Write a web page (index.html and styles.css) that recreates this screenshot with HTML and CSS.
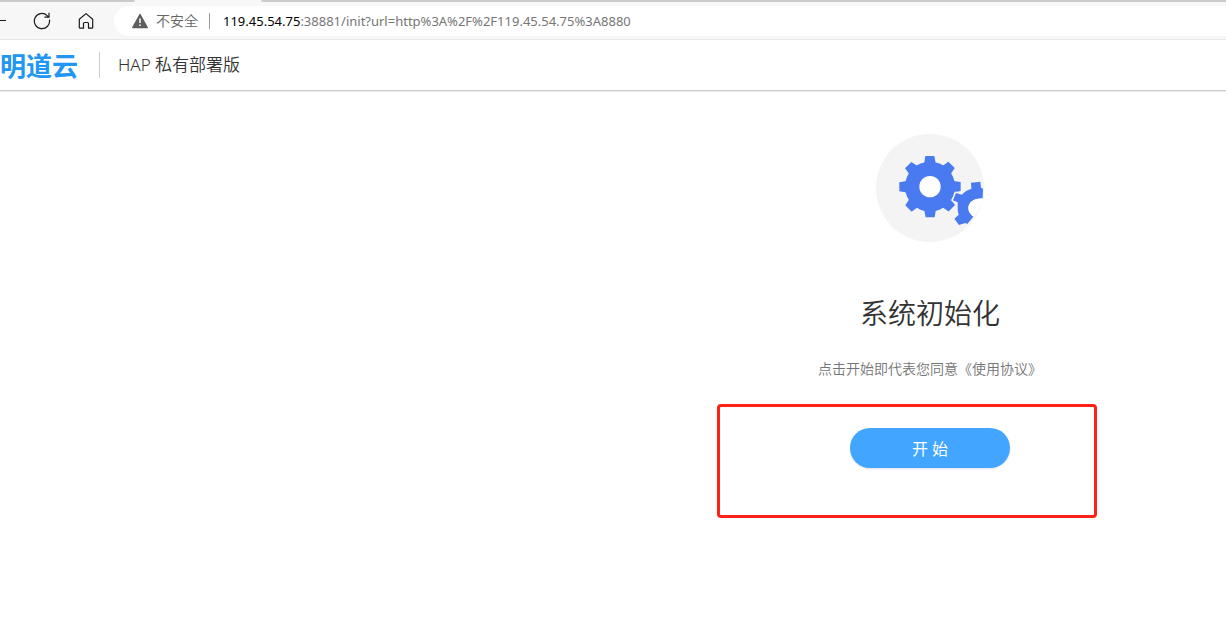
FILE: index.html
```html
<!DOCTYPE html>
<html lang="zh-CN">
<head>
<meta charset="utf-8">
<meta name="viewport" content="width=device-width, initial-scale=1">
<title>系统初始化</title>
<link rel="stylesheet" href="styles.css">
</head>
<body>
<div class="tab-strip"><span class="tab-side"></span><span class="tab-active"></span><span class="tab-rest"></span></div>
<nav class="toolbar" aria-label="浏览器">
  <button class="tool tool-back" type="button" aria-label="后退">
    <svg width="6" height="18" viewBox="0 0 6 18"><path d="M0 8.5H6" stroke="#1b1b1b"/></svg>
  </button>
  <button class="tool" type="button" aria-label="刷新">
    <svg width="18" height="18" viewBox="0 0 18 18" fill="none" stroke="#1b1b1b" stroke-width="1.2"><path d="M16.4 7.6A7.6 7.6 0 1 1 14.2 3.6L16 5.2M16 .8V5.2H11.4"/></svg>
  </button>
  <button class="tool" type="button" aria-label="主页">
    <svg width="18" height="18" viewBox="0 0 18 18" fill="none" stroke="#1b1b1b" stroke-width="1.2" stroke-linejoin="round"><path d="M2.3 7.3L9 1.6l6.700 5.700V15.400a.8.8 0 0 1-.8.8H11.500V11.500a1 1 0 0 0-1-1h-3a1 1 0 0 0-1 1V16.200H3.100a.8.8 0 0 1-.8-.8z"/></svg>
  </button>
  <div class="address">
    <svg class="warning" width="16" height="16" viewBox="0 0 16 16"><path d="M8 1.500L15.200 14.500H.8z" fill="#5f5f5f" stroke="#5f5f5f" stroke-width="1.500" stroke-linejoin="round"/><path d="M8 5.500V10M8 11.500V13" stroke="#fff" stroke-width="1.500"/></svg>
    <span class="insecure">不安全</span>
    <span class="address-rule"></span>
    <div class="url" role="textbox" contenteditable="true" spellcheck="false" aria-label="地址"><span class="host">119.45.54.75</span>:38881/init?url=http%3A%2F%2F119.45.54.75%3A8880</div>
  </div>
</nav>
<header class="app-header">
  <div class="logo">明道云</div>
  <span class="header-rule"></span>
  <span class="product">HAP 私有部署版</span>
</header>
<main class="setup">
  <svg class="gears" width="108" height="108" viewBox="48 42 324 324">
    <defs>
      <path id="tooth" d="M192 134L196 108H223L228 134z"/>
    </defs>
    <circle cx="210" cy="204" r="162" fill="#f4f4f4"/>
    <g fill="#4a7af0">
      <circle cx="210" cy="200" r="75"/>
      <use href="#tooth"/>
      <use href="#tooth" transform="rotate(45 210 200)"/>
      <use href="#tooth" transform="rotate(90 210 200)"/>
      <use href="#tooth" transform="rotate(135 210 200)"/>
      <use href="#tooth" transform="rotate(180 210 200)"/>
      <use href="#tooth" transform="rotate(225 210 200)"/>
      <use href="#tooth" transform="rotate(270 210 200)"/>
      <use href="#tooth" transform="rotate(315 210 200)"/>
    </g>
    <circle cx="210" cy="200" r="32" fill="#fff"/>
    <path d="M333 188L361 185L363 203L369 206L368 236C345 233 325 246 325 264C325 276 332 284 340 290L322 312L316 309L297 315L283 296L296 284C291 270 294 258 293 247L279 241L288 219L306 224Q317 211 334 207z" fill="#4a7af0" stroke="#f4f4f4" stroke-width="8" paint-order="stroke"/>
    <path d="M370 236C345 233 325 246 325 264C325 276 332 284 341 290Q358 268 370 236z" fill="#fff"/>
  </svg>
  <h1 class="title">系统初始化</h1>
  <p class="terms">点击开始即代表您同意<a href="#terms">《使用协议》</a></p>
  <div class="action">
    <button class="start" type="button">开 始</button>
    <span class="highlight"></span>
  </div>
</main>
</body>
</html>
```
FILE: styles.css
```css
* {
  box-sizing: border-box;
}

body {
  margin: 0;
  min-height: 100vh;
  background: #fff;
  color: #333;
  font-family: "Noto Sans", "Noto Sans CJK SC", sans-serif;
  overflow-x: hidden;
}

.tab-strip {
  display: flex;
  height: 2px;
  background: #f7f7f7;
}

.tab-side {
  width: 135px;
  background: #cbcbcb;
  border-bottom-right-radius: 2px;
}

.tab-active {
  width: 126px;
}

.tab-rest {
  flex: 1;
  background: #cbcbcb;
  border-bottom-left-radius: 2px;
}

.toolbar {
  display: flex;
  align-items: center;
  height: 38px;
  background: #f7f7f7;
  border-bottom: 1px solid #e8e8e8;
}

.tool {
  display: flex;
  padding: 0;
  margin-right: 26px;
  border: 0;
  background: none;
}

.tool-back {
  margin-right: 27px;
}

.tool:nth-child(3) {
  margin-right: 19px;
}

.address {
  display: flex;
  flex: 1;
  align-items: center;
  height: 30px;
  padding-left: 18px;
  border-radius: 15px 0 0 15px;
  background: #fff;
}

.insecure {
  margin-left: 8px;
  color: #666;
  font-size: 14px;
  font-weight: 350;
  line-height: 20px;
}

.address-rule {
  width: 1px;
  height: 16px;
  margin: 0 13px 0 11px;
  background: #999;
}

.url {
  color: #767676;
  font-size: 13px;
  line-height: 20px;
  white-space: nowrap;
  outline: 0;
}

.host {
  color: #000;
}

.app-header {
  display: flex;
  align-items: center;
  height: 51px;
  border-bottom: 1px solid #ccc;
  box-shadow: 0 1px 1px #eee;
}

.logo {
  width: 78px;
  padding-top: 2px;
  color: #2196f3;
  font-size: 26px;
  font-weight: 700;
  line-height: 40px;
  white-space: nowrap;
}

.header-rule {
  width: 1px;
  height: 26px;
  margin: 0 18px 0 21px;
  background: #ccc;
}

.product {
  font-size: 17px;
  font-weight: 350;
  line-height: 24px;
}

.setup {
  display: flex;
  flex-direction: column;
  align-items: center;
  padding: 43px 0 40px 634px;
}

.title {
  margin: 51px 0 0;
  font-size: 28px;
  font-weight: 350;
  line-height: 40px;
}

.terms {
  margin: 26px 0 0;
  color: #757575;
  font-size: 14px;
  font-weight: 350;
  line-height: 20px;
}

.terms a {
  color: inherit;
  text-decoration: none;
}

.action {
  position: relative;
  margin-top: 49px;
}

.start {
  display: block;
  width: 160px;
  height: 40px;
  padding: 0;
  border: 0;
  border-radius: 20px;
  background: #42a5ff;
  box-shadow: 0 1px 2px rgba(0, 0, 0, 0.12);
  color: #fff;
  font: 400 16px "Noto Sans", "Noto Sans CJK SC", sans-serif;
}

.highlight {
  position: absolute;
  top: -24px;
  left: -133px;
  width: 380px;
  height: 114px;
  border: 3px solid #ff2116;
  border-radius: 4px;
  pointer-events: none;
}
```
